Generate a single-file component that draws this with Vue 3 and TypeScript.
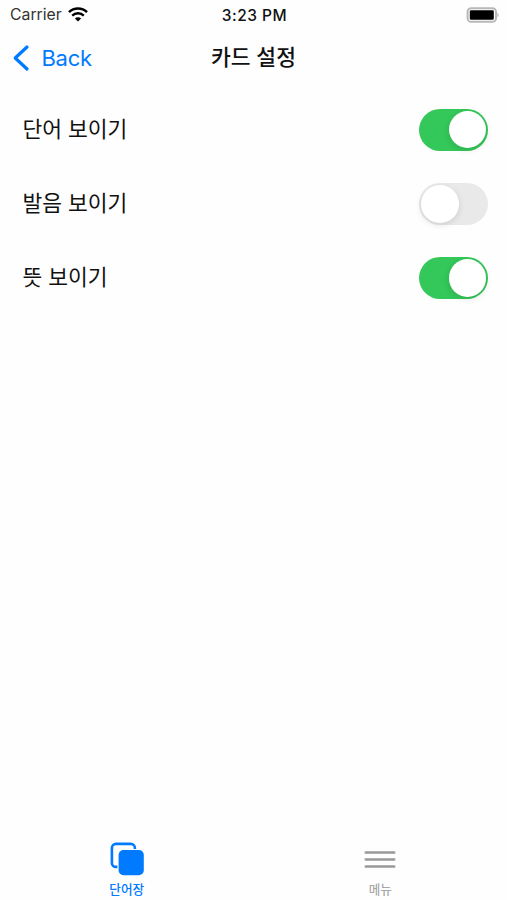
<script setup lang="ts">
import { ref } from 'vue'

interface Setting {
  label: string
  on: boolean
}

const settings = ref<Setting[]>([
  { label: '단어 보이기', on: true },
  { label: '발음 보이기', on: false },
  { label: '뜻 보이기', on: true },
])
</script>

<template>
  <div class="screen">
    <header class="status">
      <div class="carrier">
        <span class="carrier-name">Carrier</span>
        <svg class="wifi" width="20" height="15" viewBox="0 0 20 15" fill="none" stroke="#000">
          <path d="M1 5.2 A13 13 0 0 1 19 5.2" stroke-width="2.5" />
          <path d="M4.2 8.6 A8.5 8.5 0 0 1 15.8 8.6" stroke-width="2.4" />
          <path d="M10 14.6 L6.9 11.5 A4.4 4.4 0 0 1 13.1 11.5 Z" fill="#000" stroke="none" />
        </svg>
      </div>
      <span class="time">3:23 PM</span>
      <svg class="battery" width="33" height="16" viewBox="0 0 33 16">
        <rect x="1.6" y="1.2" width="28.4" height="13.6" rx="3.6" fill="#fff" stroke="#b8b8b8" stroke-width="2" />
        <rect x="3.8" y="3.2" width="24" height="9.6" rx="1.4" fill="#000" />
        <path d="M31.4 5.6 Q34 8 31.4 10.4 Z" fill="#b8b8b8" />
      </svg>
    </header>

    <nav class="navbar">
      <button class="back" type="button">
        <svg width="18" height="28" viewBox="0 0 18 28" fill="none" stroke="#007aff" stroke-width="3.2" stroke-linecap="round" stroke-linejoin="round">
          <path d="M15 3 L3.2 14 L15 25" />
        </svg>
        <span class="back-label">Back</span>
      </button>
      <h1 class="title">카드 설정</h1>
      <span></span>
    </nav>

    <main class="settings">
      <div v-for="item in settings" :key="item.label" class="row">
        <span class="label">{{ item.label }}</span>
        <button class="switch" :class="{ on: item.on }" type="button" role="switch" :aria-checked="item.on" @click="item.on = !item.on">
          <span class="knob"></span>
        </button>
      </div>
    </main>

    <footer class="tabs">
      <button class="tab active" type="button">
        <svg width="36" height="36" viewBox="0 0 36 36">
          <rect x="2.9" y="2.9" width="23" height="23" rx="4" fill="none" stroke="#007aff" stroke-width="2.6" />
          <rect x="8.4" y="7.9" width="27" height="27" rx="6" fill="#fff" />
          <rect x="9.6" y="9" width="25.2" height="25.2" rx="4.8" fill="#007aff" />
        </svg>
        <span class="tab-label">단어장</span>
      </button>
      <button class="tab" type="button">
        <svg width="36" height="36" viewBox="0 0 36 36" stroke="#999" stroke-width="2.4" stroke-linecap="round">
          <path d="M3.7 11.5 H32.3 M3.7 18.5 H32.3 M3.7 25.5 H32.3" />
        </svg>
        <span class="tab-label">메뉴</span>
      </button>
    </footer>
  </div>
</template>

<style>
body {
  margin: 0;
  background: #fefefe;
}
</style>

<style scoped>
.screen {
  display: flex;
  flex-direction: column;
  width: 507px;
  height: 900px;
  background: #fefefe;
  color: #111;
  font-family: Inter, "Noto Sans CJK KR", sans-serif;
  overflow: hidden;
}

button {
  margin: 0;
  padding: 0;
  border: 0;
  background: none;
  font-family: inherit;
}

.status {
  display: grid;
  grid-template-columns: 1fr auto 1fr;
  align-items: center;
  height: 29px;
  padding: 0 8px 0 10px;
  box-sizing: border-box;
}

.carrier {
  display: flex;
  align-items: center;
  gap: 6px;
}

.carrier-name {
  padding-top: 1px;
  font-size: 15.8px;
  line-height: 20px;
  color: #333;
  white-space: nowrap;
}

.time {
  padding-top: 2px;
  font-size: 15.5px;
  line-height: 20px;
  font-weight: 500;
  letter-spacing: 0.5px;
  white-space: nowrap;
}

.battery {
  justify-self: end;
}

.navbar {
  display: grid;
  grid-template-columns: 1fr auto 1fr;
  align-items: center;
  height: 58px;
  padding: 0 12px 0 12px;
}

.back {
  display: flex;
  align-items: center;
  gap: 11.5px;
  color: #007aff;
}

.back-label {
  font-size: 22px;
  line-height: 28px;
  letter-spacing: -0.3px;
}

.title {
  margin: 0;
  padding-bottom: 2px;
  font-size: 21.5px;
  line-height: 30px;
  font-weight: 500;
}

.settings {
  flex: 1;
  padding-top: 5.5px;
}

.row {
  display: flex;
  align-items: center;
  justify-content: space-between;
  height: 74.2px;
  padding: 0 19px 0 22.4px;
}

.label {
  padding-bottom: 1px;
  font-size: 21.5px;
  line-height: 30px;
}

.switch {
  display: flex;
  align-items: center;
  width: 69px;
  height: 42px;
  padding: 0 2px;
  border-radius: 21px;
  background: #e9e9ea;
}

.switch.on {
  justify-content: flex-end;
  background: #34c759;
}

.knob {
  width: 37.5px;
  height: 37.5px;
  border-radius: 50%;
  background: #fff;
  box-shadow: 0 2px 6px rgba(0, 0, 0, 0.12);
}

.tabs {
  display: grid;
  grid-template-columns: 1fr 1fr;
  height: 59px;
}

.tab {
  display: flex;
  flex-direction: column;
  align-items: center;
  color: #999;
}

.tab.active {
  color: #007aff;
}

.tab-label {
  margin-top: 4px;
  font-size: 12.6px;
  line-height: 18px;
  font-weight: 400;
}

.tab.active .tab-label {
  font-weight: 500;
}
</style>
